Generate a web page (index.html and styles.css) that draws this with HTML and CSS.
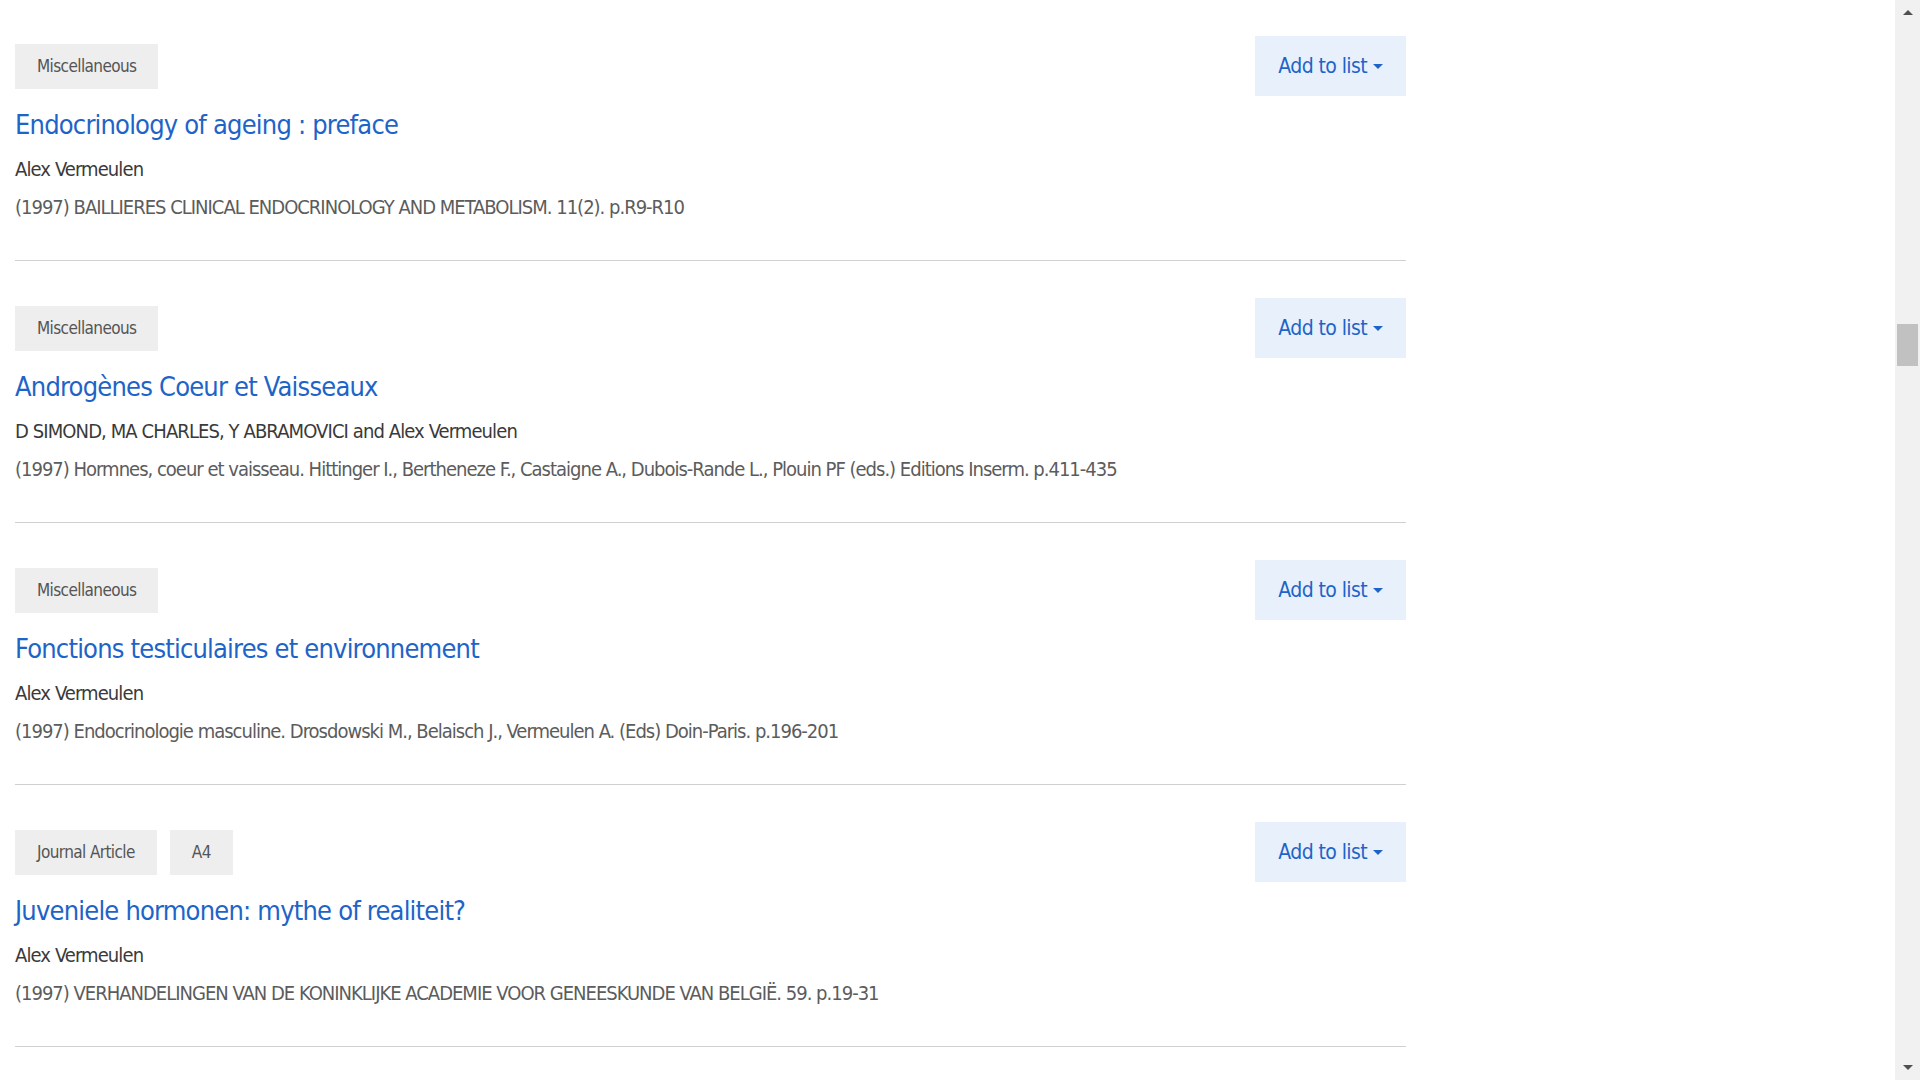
FILE: index.html
```html
<!DOCTYPE html>
<html>
    <head>
        <title>Publications - Alex Vermeulen</title>
        <meta charset="UTF-8">
        <link rel="stylesheet" href="styles.css">
    </head>
    <body>
        <main class="page">
            <ul class="results">
                <li class="record">
                    <div class="record-head">
                        <div class="badges">
                            <span class="badge">Miscellaneous</span>
                        </div>
                        <button class="add-btn" type="button">Add to list <span class="caret"></span></button>
                    </div>
                    <h3 class="record-title"><a href="#">Endocrinology of ageing : preface</a></h3>
                    <p class="authors">Alex Vermeulen</p>
                    <p class="citation">(1997) BAILLIERES CLINICAL ENDOCRINOLOGY AND METABOLISM. 11(2). p.R9-R10</p>
                </li>
                <li class="record">
                    <div class="record-head">
                        <div class="badges">
                            <span class="badge">Miscellaneous</span>
                        </div>
                        <button class="add-btn" type="button">Add to list <span class="caret"></span></button>
                    </div>
                    <h3 class="record-title"><a href="#">Androgènes Coeur et Vaisseaux</a></h3>
                    <p class="authors">D SIMOND, MA CHARLES, Y ABRAMOVICI and Alex Vermeulen</p>
                    <p class="citation">(1997) Hormnes, coeur et vaisseau. Hittinger I., Bertheneze F., Castaigne A., Dubois-Rande L., Plouin PF (eds.) Editions Inserm. p.411-435</p>
                </li>
                <li class="record">
                    <div class="record-head">
                        <div class="badges">
                            <span class="badge">Miscellaneous</span>
                        </div>
                        <button class="add-btn" type="button">Add to list <span class="caret"></span></button>
                    </div>
                    <h3 class="record-title"><a href="#">Fonctions testiculaires et environnement</a></h3>
                    <p class="authors">Alex Vermeulen</p>
                    <p class="citation">(1997) Endocrinologie masculine. Drosdowski M., Belaisch J., Vermeulen A. (Eds) Doin-Paris. p.196-201</p>
                </li>
                <li class="record">
                    <div class="record-head">
                        <div class="badges">
                            <span class="badge">Journal Article</span>
                            <span class="badge">A4</span>
                        </div>
                        <button class="add-btn" type="button">Add to list <span class="caret"></span></button>
                    </div>
                    <h3 class="record-title"><a href="#">Juveniele hormonen: mythe of realiteit?</a></h3>
                    <p class="authors">Alex Vermeulen</p>
                    <p class="citation">(1997) VERHANDELINGEN VAN DE KONINKLIJKE ACADEMIE VOOR GENEESKUNDE VAN BELGIË. 59. p.19-31</p>
                </li>
            </ul>
        </main>
        <aside class="scrollbar">
            <div class="sb-btn"><span class="sb-arrow up"></span></div>
            <div class="sb-track"><div class="sb-thumb"></div></div>
            <div class="sb-btn"><span class="sb-arrow down"></span></div>
        </aside>
    </body>
</html>
```

FILE: styles.css
```css
body {
    margin: 0;
    height: 100vh;
    overflow: hidden;
    display: flex;
    font-family: "DejaVu Sans Condensed", "DejaVu Sans", sans-serif;
    color: #333;
    background: #fff;
}
.page {
    flex: 1;
    overflow: hidden;
}
.results {
    list-style: none;
    margin: 0;
    padding: 36px 0 0 15px;
    width: 1391px;
}
.record {
    padding-bottom: 38px;
    margin-bottom: 37px;
    border-bottom: 1px solid #d0d0d0;
}
.record-head {
    display: flex;
    align-items: center;
    justify-content: space-between;
    height: 60px;
}
.badges {
    display: flex;
    gap: 13px;
}
.badge {
    background: #eee;
    color: #555;
    font-size: 17px;
    letter-spacing: -0.6px;
    line-height: 45px;
    padding: 0 22px;
}
.add-btn {
    font-family: inherit;
    font-size: 21px;
    letter-spacing: -0.6px;
    color: #1e64c8;
    background: #e8f0fb;
    border: 0;
    height: 60px;
    padding: 0 23px;
    display: flex;
    align-items: center;
    gap: 6px;
}
.caret {
    width: 0;
    height: 0;
    border-left: 5px solid transparent;
    border-right: 5px solid transparent;
    border-top: 5px solid #1e64c8;
}
.record-title {
    font-size: 27px;
    font-weight: normal;
    letter-spacing: -0.8px;
    line-height: 36px;
    margin: 11px 0 11px;
}
.record-title a {
    color: #1e64c8;
    text-decoration: none;
}
.authors {
    font-size: 20px;
    letter-spacing: -0.9px;
    line-height: 30px;
    margin: 0 0 8px;
    color: #3a3a3a;
}
.citation {
    font-size: 20px;
    letter-spacing: -1px;
    line-height: 30px;
    margin: 0;
    color: #5c5c5c;
}

/* page scrollbar */
.scrollbar {
    width: 25px;
    flex: none;
    background: #f1f1f1;
    display: flex;
    flex-direction: column;
    align-items: center;
}
.sb-btn {
    height: 25px;
    width: 25px;
    display: flex;
    align-items: center;
    justify-content: center;
}
.sb-arrow {
    width: 0;
    height: 0;
    border-left: 5px solid transparent;
    border-right: 5px solid transparent;
}
.sb-arrow.up {
    border-bottom: 5px solid #505050;
}
.sb-arrow.down {
    border-top: 5px solid #505050;
}
.sb-track {
    flex: 1;
    width: 21px;
    padding-top: 299px;
}
.sb-thumb {
    height: 42px;
    background: #c1c1c1;
}
```
